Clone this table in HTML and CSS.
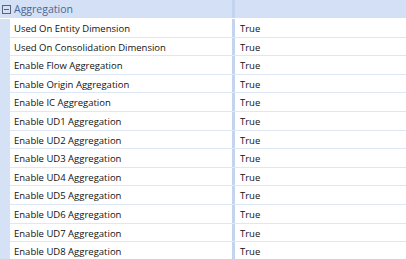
FILE: index.html
```html
<!DOCTYPE html>
<html>
<head>
<meta charset="utf-8">
<link rel="stylesheet" href="styles.css">
</head>
<body>
<div class="grid">
  <div class="category">
    <span class="toggle"><svg width="9" height="9" viewBox="0 0 9 9"><rect x="0.5" y="0.5" width="8" height="8" fill="none" stroke="#5a6478"/><line x1="2" y1="4.5" x2="7" y2="4.5" stroke="#5a6478"/></svg></span>
    <span class="cat-name">Aggregation</span>
    <span class="cat-split"></span>
  </div>
  <div class="row"><div class="name">Used On Entity Dimension</div><div class="split"></div><div class="value">True</div></div>
  <div class="row"><div class="name">Used On Consolidation Dimension</div><div class="split"></div><div class="value">True</div></div>
  <div class="row"><div class="name">Enable Flow Aggregation</div><div class="split"></div><div class="value">True</div></div>
  <div class="row"><div class="name">Enable Origin Aggregation</div><div class="split"></div><div class="value">True</div></div>
  <div class="row"><div class="name">Enable IC Aggregation</div><div class="split"></div><div class="value">True</div></div>
  <div class="row"><div class="name">Enable UD1 Aggregation</div><div class="split"></div><div class="value">True</div></div>
  <div class="row"><div class="name">Enable UD2 Aggregation</div><div class="split"></div><div class="value">True</div></div>
  <div class="row"><div class="name">Enable UD3 Aggregation</div><div class="split"></div><div class="value">True</div></div>
  <div class="row"><div class="name">Enable UD4 Aggregation</div><div class="split"></div><div class="value">True</div></div>
  <div class="row"><div class="name">Enable UD5 Aggregation</div><div class="split"></div><div class="value">True</div></div>
  <div class="row"><div class="name">Enable UD6 Aggregation</div><div class="split"></div><div class="value">True</div></div>
  <div class="row"><div class="name">Enable UD7 Aggregation</div><div class="split"></div><div class="value">True</div></div>
  <div class="row"><div class="name">Enable UD8 Aggregation</div><div class="split"></div><div class="value">True</div></div>
</div>
</body>
</html>
```
FILE: styles.css
```css
html, body {
  margin: 0;
  padding: 0;
  background: #ffffff;
  overflow: hidden;
}
.grid {
  width: 406px;
  font-family: "Open Sans", "Noto Sans", sans-serif;
  font-size: 9.5px;
  color: #111111;
  background: #d5e1f5;
}
.category {
  display: flex;
  align-items: center;
  height: 18px;
  border-bottom: 1px solid #ffffff;
  background: #d3e0f6;
}
.toggle {
  width: 13px;
  display: flex;
  justify-content: center;
}
.toggle svg { display: block; }
.cat-name {
  width: 218px;
  padding-left: 1px;
  color: #4a6795;
  font-size: 10.5px;
}
.cat-split {
  align-self: stretch;
  width: 3px;
  background: #c4d4ee;
}
.row {
  display: flex;
  height: 17.6px;
  margin-left: 10px;
  border-bottom: 1px solid #dde7f6;
  background: #ffffff;
}
.name {
  width: 218px;
  padding-left: 4px;
  line-height: 19px;
  white-space: nowrap;
  overflow: hidden;
}
.split {
  width: 3px;
  background: #c4d4ee;
}
.value {
  flex: 1;
  padding-left: 5px;
  line-height: 20px;
}
```
